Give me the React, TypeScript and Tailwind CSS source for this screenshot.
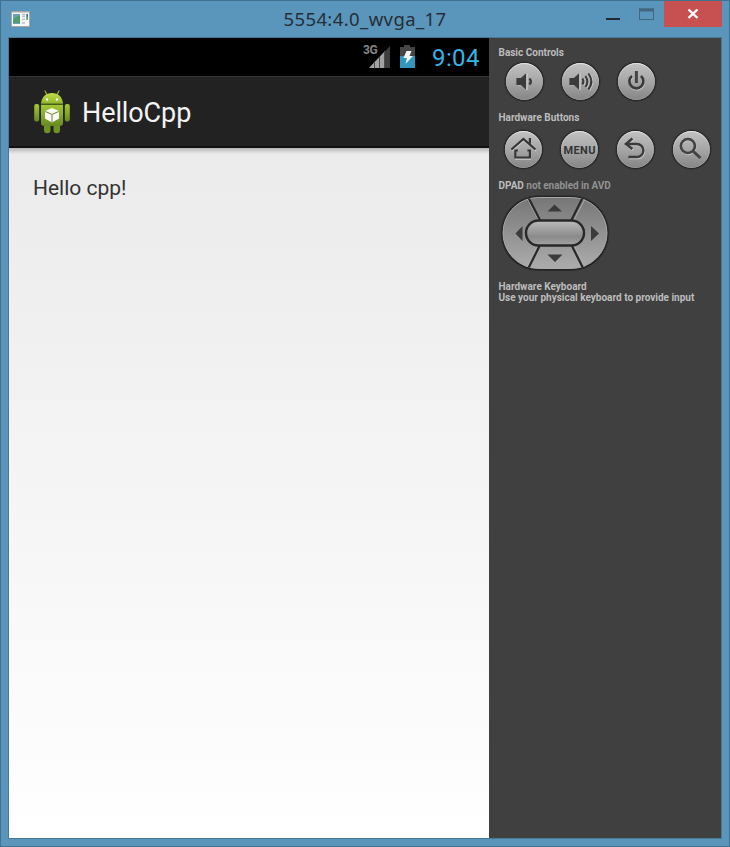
import type { ReactNode } from "react";

function AppIcon() {
  return (
    <svg width="19" height="16" viewBox="0 0 19 16" className="block">
      <rect x="0" y="0" width="19" height="16" rx="1" fill="#a9a6a8" />
      <rect x="1" y="1.5" width="17" height="13.5" fill="#f7f8f8" />
      <rect x="2" y="3" width="7" height="10" fill="#6f9fb5" />
      <path d="M2 9 L5 6 L9 4.5 V12 H2Z" fill="#4f9d6b" />
      <path d="M11 3.5h3M11 5.5h3M11 8.5h3M11 12h3" stroke="#bcbec2" strokeWidth="1.4" />
      <rect x="15.3" y="3" width="1.7" height="3" fill="#3f6fb0" />
      <rect x="15.3" y="6" width="1.7" height="3" fill="#5aa866" />
    </svg>
  );
}

function TitleBar() {
  return (
    <header className="flex h-[36px] items-start">
      <div className="w-[220px] pl-[10px] pt-[10px]">
        <AppIcon />
      </div>
      <h1 className="w-[288px] whitespace-nowrap pt-[5px] text-center font-['Noto_Sans',sans-serif] text-[18.5px] leading-[26px] tracking-[0.4px] text-[#252e35]">
        5554:4.0_wvga_17
      </h1>
      <div className="ml-auto flex pr-[7px]">
        <svg width="60" height="26" viewBox="0 0 60 26">
          <rect x="2" y="17" width="14" height="2" fill="#222a30" />
          <rect x="35.5" y="8" width="14" height="10.500" fill="none" stroke="#42687f" />
          <rect x="35" y="7.500" width="15" height="3" fill="#42687f" />
        </svg>
        <button className="flex h-[26px] w-[58px] items-center justify-center bg-[#c75050]">
          <svg width="12" height="10" viewBox="0 0 12 10" className="mr-[1px]">
            <path d="M1.5 .5 10.5 9M10.5 .5 1.5 9" stroke="#fff" strokeWidth="2.4" />
          </svg>
        </button>
      </div>
    </header>
  );
}

function StatusBar() {
  return (
    <div className="flex h-[38px] justify-end bg-black pr-[9px]">
      <div className="flex w-[6px] pt-[5px] font-['Roboto',sans-serif] text-[12px] font-bold leading-[15px] tracking-[-0.5px] text-[#858585]">
        3G
      </div>
      <svg width="63" height="38" viewBox="0 0 63 38">
        <path d="M0 30 L21 8 V30Z" fill="#3d3d3d" />
        <path d="M0 30 L16 13 V30Z" fill="#a2a2a2" />
        <path d="M5.500 24.500v5.500M10.500 19v11M15.500 14v16" stroke="#4c4c4c" />
        <path d="M31 9h4V7h6v2h5v21H31Z" fill="#454545" />
        <path d="M31 18h15v12H31Z" fill="#3596bd" />
        <path d="m37.500 13 5 0-2 5h3.500l-7.500 8 1.500-6h-3.500Z" fill="#f2f5f5" />
      </svg>
      <div className="w-[48px] whitespace-nowrap font-['Roboto',sans-serif] text-[24px] leading-[40px] tracking-[0.4px] text-[#33b5e5]">
        9:04
      </div>
    </div>
  );
}

function AndroidRobot() {
  return (
    <svg width="38" height="44" viewBox="0 0 38 44" className="block">
      <defs>
        <linearGradient id="robot" x1="0" y1="0" x2="0" y2="1">
          <stop offset="0" stopColor="#a3c832" />
          <stop offset=".45" stopColor="#8aad2a" />
          <stop offset="1" stopColor="#668823" />
        </linearGradient>
        <linearGradient id="robotHead" x1="0" y1="0" x2="0" y2="1">
          <stop offset="0" stopColor="#c0dd45" />
          <stop offset="1" stopColor="#93b72c" />
        </linearGradient>
      </defs>
      <path d="m12 1 2.5 4.5M26 1l-2.5 4.5" stroke="#93b530" strokeWidth="1.3" strokeLinecap="round" />
      <path d="M8 13.7C8.5 7 13 3 19 3s10.500 4 11 10.700Z" fill="url(#robotHead)" />
      <circle cx="14" cy="9.500" r="1.200" fill="#fff" />
      <circle cx="24" cy="9.500" r="1.200" fill="#fff" />
      <rect x="1.200" y="14" width="5" height="17.500" rx="2" fill="url(#robot)" />
      <rect x="31.800" y="14" width="5" height="17.500" rx="2" fill="url(#robot)" />
      <path d="M11 33h6.500v7a3 3 0 0 1-6.500 0ZM20.500 33H27v7a3 3 0 0 1-6.500 0Z" fill="#6f9224" />
      <path d="M8 15h22v18q0 3-3 3H11q-3 0-3-3Z" fill="url(#robot)" />
      <path d="M8 14.400h22" stroke="#4c661a" strokeWidth="1" />
      <path d="m19 18 7 2.900v7.600L19 32.500l-7-4v-7.600Z" fill="#fafcf6" />
      <path d="m12.300 21.400 6.700 3 6.700-3M19 24.400v7.600" fill="none" stroke="#758b48" strokeWidth="1.100" />
    </svg>
  );
}

function PhoneScreen() {
  return (
    <main className="flex w-[480px] flex-col">
      <StatusBar />
      <div className="flex h-[72px] items-start border-b-2 border-t border-b-[#111] border-t-[#343434] bg-[#222]">
        <div className="w-[73px] pl-[24px] pt-[13px]">
          <AndroidRobot />
        </div>
        <div className="pt-[20px] font-['Roboto',sans-serif] text-[27px] leading-[32px] tracking-[-0.1px] text-[#f3f3f3]">HelloCpp</div>
      </div>
      <div className="h-[6px] bg-linear-to-b from-[#b7b7b7] to-[#ebebeb]" />
      <div className="flex-1 bg-linear-to-b from-[#ebebeb] to-white pl-[24px] pt-[21px] font-['Roboto',sans-serif] text-[21px] leading-[26px] text-[#333]">
        Hello cpp!
      </div>
    </main>
  );
}

function RoundButton({ label, children }: { label: string; children: ReactNode }) {
  return (
    <button aria-label={label} className="block h-[44px] w-[44px]">
      <svg width="44" height="44" viewBox="0 0 44 44">
        <g transform="translate(.4 .5)">
          <circle cx="22" cy="22" r="21.500" fill="url(#halo)" />
          <circle cx="22" cy="22" r="18.500" fill="url(#metal)" />
          <circle cx="22" cy="22" r="18" fill="none" stroke="url(#rim)" />
          {children}
        </g>
      </svg>
    </button>
  );
}

function SharedPaints() {
  return (
    <svg width="0" height="0" className="absolute">
      <defs>
        <radialGradient id="halo">
          <stop offset=".86" stopColor="#1c1c1c" />
          <stop offset="1" stopColor="#404040" stopOpacity="0" />
        </radialGradient>
        <linearGradient id="metal" x1="0" y1="0" x2="0" y2="1">
          <stop offset="0" stopColor="#c2c2c2" />
          <stop offset=".5" stopColor="#a6a6a6" />
          <stop offset="1" stopColor="#858585" />
        </linearGradient>
        <linearGradient id="rim" x1="0" y1="0" x2="0" y2="1">
          <stop offset="0" stopColor="#e4e4e4" />
          <stop offset=".5" stopColor="#a8a8a8" />
          <stop offset="1" stopColor="#939393" />
        </linearGradient>
      </defs>
    </svg>
  );
}

function Speaker() {
  return (
    <>
      <path d="M9 18.500h4.500l5.500-5v17l-5.500-5H9Z" transform="translate(1 .5)" fill="#c6c6c6" />
      <path d="M9 18.500h4.500l5.500-5v17l-5.500-5H9Z" fill="#3b3b3b" />
      <path d="M19.500 13.500v17" stroke="#d0d0d0" />
    </>
  );
}

function BasicControls() {
  return (
    <div className="flex gap-[12px] pl-[4px]">
      <RoundButton label="Volume down">
        <g transform="translate(5 0)">
          <Speaker />
          <path d="M22 19q2.800 3 0 6" fill="none" stroke="#3b3b3b" strokeWidth="2.400" />
        </g>
      </RoundButton>
      <RoundButton label="Volume up">
        <g transform="translate(2 0)">
          <Speaker />
          <path d="M22 19q2.200 3 0 6M25 16.500q4 5.500 0 11M28 14q6 8 0 16" fill="none" stroke="#c6c6c6" strokeWidth="2" transform="translate(1 .7)" />
          <path d="M22 19q2.200 3 0 6M25 16.500q4 5.500 0 11M28 14q6 8 0 16" fill="none" stroke="#3b3b3b" strokeWidth="2" />
        </g>
      </RoundButton>
      <RoundButton label="Power">
        <path d="M17.500 16.500a7 7 0 1 0 9 0" fill="none" stroke="#c8c8c8" strokeWidth="2.400" transform="translate(.5 1)" />
        <path d="M17.500 16.500a7 7 0 1 0 9 0" fill="none" stroke="#3a3a3a" strokeWidth="2.600" />
        <path d="M22 11.500v12" stroke="#444" strokeWidth="3" />
      </RoundButton>
    </div>
  );
}

function HardwareButtons() {
  return (
    <div className="flex gap-[12px] pl-[3px]">
      <RoundButton label="Home">
        <g fill="none" stroke="#363636" strokeWidth="2.200">
          <path d="m10 22 12-10.500L34 22M14 22v8h14.500v-8" stroke="#cbcbcb" strokeWidth="1.500" transform="translate(.5 1.500)" />
          <path d="M10 22 22 11.500 34 22M28.500 16v-5.500" />
          <path d="M16.500 23H14v7h14.500v-7h-2.500" />
        </g>
      </RoundButton>
      <RoundButton label="Menu">
        <text x="22" y="26.500" textAnchor="middle" textLength="32" className="fill-[#333] font-['Roboto',sans-serif] text-[11px] font-bold">
          MENU
        </text>
      </RoundButton>
      <RoundButton label="Back">
        <g fill="none" strokeWidth="2.400">
          <path d="m19 11-6.500 5.500 6.500 5M13 16.500h10.500a6.500 6.500 0 0 1 0 13H15" stroke="#c8c8c8" transform="translate(.7 1)" />
          <path d="m19 11-6.500 5.500 6.500 5M13 16.500h10.500a6.500 6.500 0 0 1 0 13H15" stroke="#3b3b3b" />
        </g>
      </RoundButton>
      <RoundButton label="Search">
        <g fill="none" strokeWidth="2.600">
          <circle cx="18.500" cy="18.500" r="7" stroke="#bfbfbf" transform="translate(.5 1)" />
          <circle cx="18.500" cy="18.500" r="7" stroke="#424242" />
          <path d="m23.500 23.500 7.500 7" stroke="#424242" strokeWidth="3" />
        </g>
      </RoundButton>
    </div>
  );
}

function DirectionPad() {
  return (
    <svg width="114" height="80" viewBox="0 0 114 80" className="block">
      <defs>
        <linearGradient id="pad" x1="0" y1="0" x2="0" y2="1">
          <stop offset="0" stopColor="#777" />
          <stop offset="1" stopColor="#acacac" />
        </linearGradient>
        <linearGradient id="centerKey" x1="0" y1="0" x2="0" y2="1">
          <stop offset="0" stopColor="#bcbcbc" />
          <stop offset=".65" stopColor="#8a8a8a" />
          <stop offset="1" stopColor="#a4a4a4" />
        </linearGradient>
        <clipPath id="padShape">
          <rect x="4.500" y="4" width="105" height="72" rx="36" />
        </clipPath>
      </defs>
      <rect x="2.500" y="2" width="109" height="76" rx="38" fill="#333" />
      <rect x="3.500" y="3" width="107" height="74.500" rx="37" fill="#242424" />
      <rect x="5" y="4.500" width="104" height="71" rx="35.500" fill="url(#pad)" stroke="#a8a8a8" />
      <g clipPath="url(#padShape)">
        <path d="m28 3 12.500 24M88.500 3 76 27M39.500 52 27 77M76 52l12.500 25" stroke="#aaa" strokeWidth="1" />
        <path d="m28.500 1 14 27M86.500 1 73 28M42.500 51 28.500 79M73 51l14 28" stroke="#292929" strokeWidth="2.200" />
      </g>
      <rect x="28" y="27.500" width="58" height="25" rx="12.500" fill="url(#centerKey)" stroke="#292929" strokeWidth="2.400" />
      <path d="M49.500 18.500 56.500 11.500l7.500 7ZM49.500 61.500h15L57 69ZM24.500 33v15L17.500 40.500ZM93 33v15l8-7.500Z" fill="#3b3b3b" />
    </svg>
  );
}

function SectionLabel({ children }: { children: ReactNode }) {
  return (
    <h2 className="whitespace-nowrap pl-[0.5px] text-[10px] font-bold leading-[11px] text-[#bdbdbd]">{children}</h2>
  );
}

function ControlPanel() {
  return (
    <aside className="flex w-[232px] flex-col bg-[#404040] pl-[9px] pt-[9px] font-['Roboto',sans-serif]">
      <SharedPaints />
      <section className="h-[65px]">
        <SectionLabel>Basic Controls</SectionLabel>
        <div className="pt-[1px]"><BasicControls /></div>
      </section>
      <section className="h-[68px]">
        <SectionLabel>Hardware Buttons</SectionLabel>
        <div className="pt-[4px]"><HardwareButtons /></div>
      </section>
      <section className="h-[101px]">
        <SectionLabel>
          DPAD <span className="tracking-[-0.05px] text-[#929292]">not enabled in AVD</span>
        </SectionLabel>
        <div className="pt-[2px]"><DirectionPad /></div>
      </section>
      <section>
        <SectionLabel>Hardware Keyboard</SectionLabel>
        <p className="whitespace-nowrap pl-[0.5px] text-[10px] font-bold leading-[11px] text-[#bdbdbd]">
          Use your physical keyboard to provide input
        </p>
      </section>
    </aside>
  );
}

export default function App() {
  return (
    <div className="h-[847px] w-[730px] overflow-hidden border border-[#42708f] bg-[#5a95bb]">
      <TitleBar />
      <div className="ml-[7px] flex h-[802px] w-[714px] border border-[#477894]">
        <PhoneScreen />
        <ControlPanel />
      </div>
    </div>
  );
}
